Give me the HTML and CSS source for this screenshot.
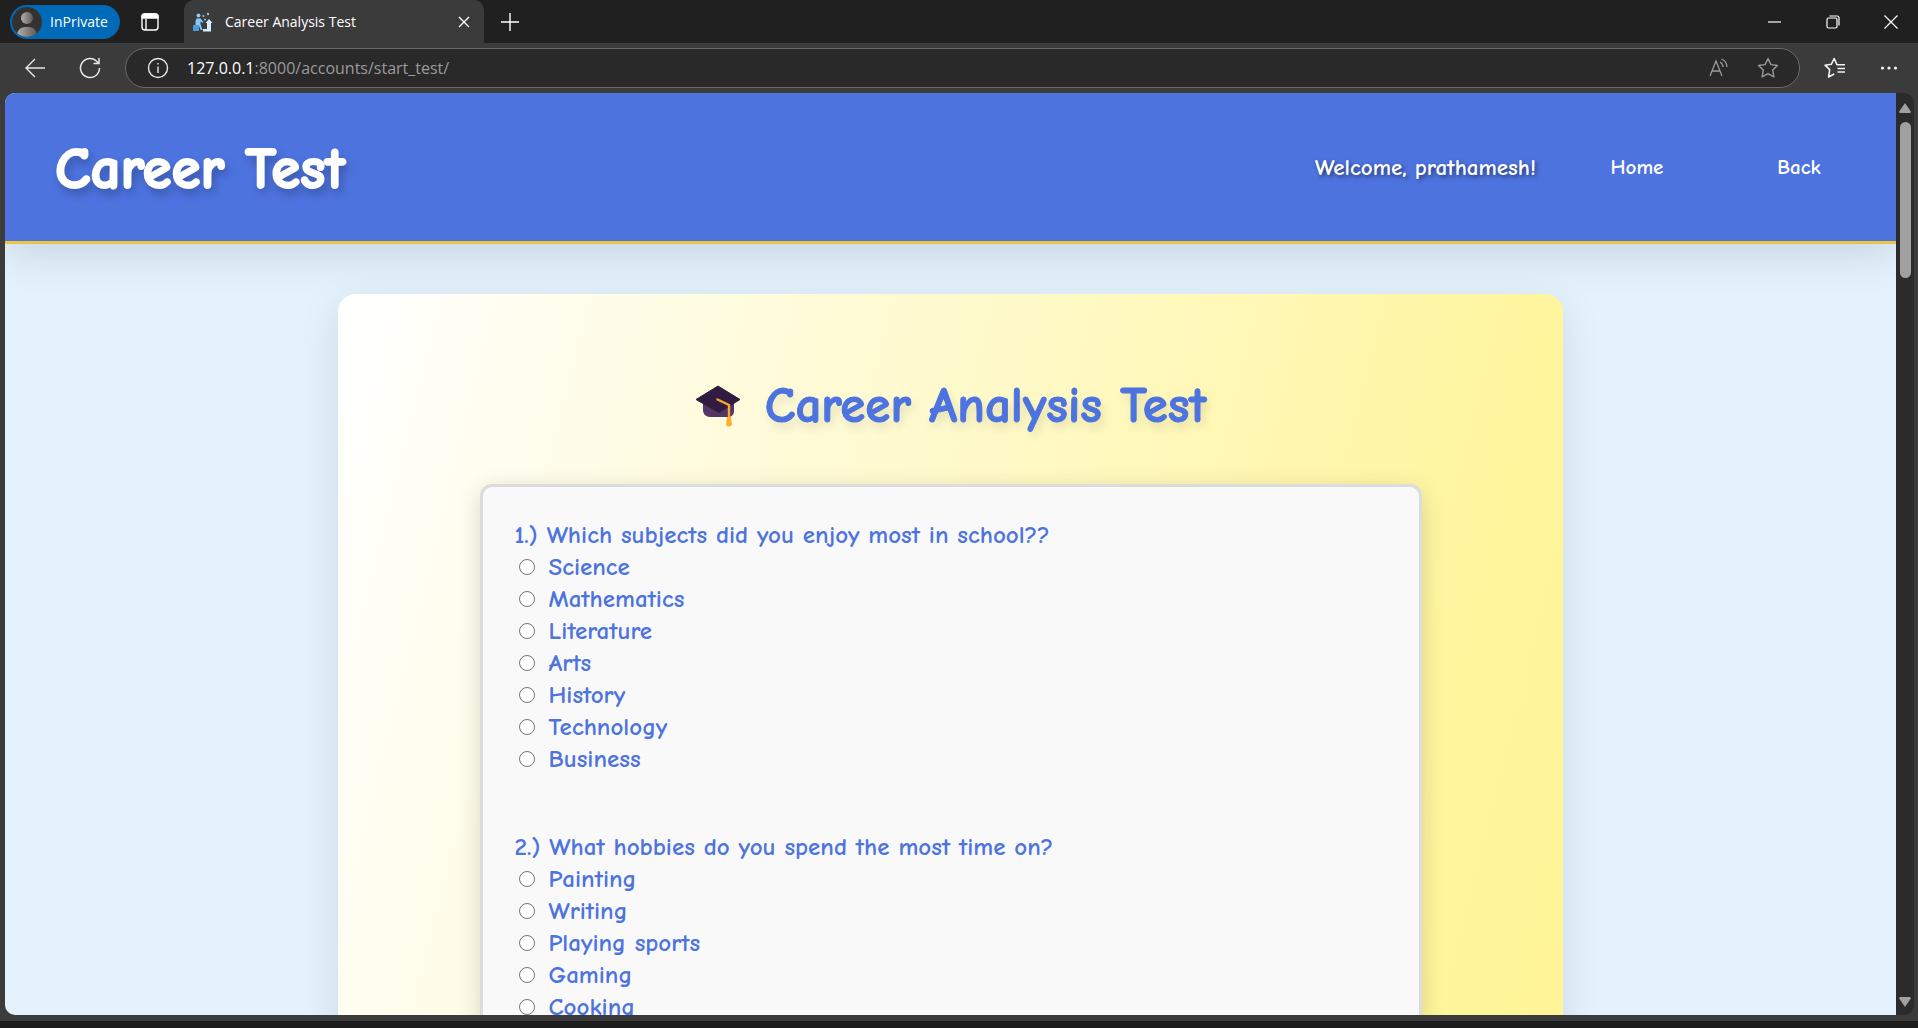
FILE: index.html
```html
<!DOCTYPE html>
<html lang="en">
<head>
<meta charset="utf-8">
<title>Career Analysis Test</title>
<link rel="stylesheet" href="styles.css">
</head>
<body>
<div class="tabbar">
  <button class="profile" type="button">
    <svg width="30" height="30" viewBox="0 0 30 30" aria-hidden="true">
      <defs><linearGradient id="skin"><stop offset="0" stop-color="#b5b0ab"/><stop offset="1" stop-color="#5c5855"/></linearGradient>
      <clipPath id="disc"><circle cx="15" cy="15" r="15"/></clipPath></defs>
      <circle cx="15" cy="15" r="15" fill="#343230"/>
      <g clip-path="url(#disc)" fill="url(#skin)"><circle cx="15" cy="11" r="6"/><path d="M5 30v-3a8 8 0 0 1 8-7h4a8 8 0 0 1 8 7v3z"/></g>
    </svg>
    InPrivate
  </button>
  <button class="icon-btn" type="button" aria-label="Tab actions">
    <svg width="20" height="20" viewBox="0 0 20 20" fill="none" stroke="#fff" stroke-width="1.4"><rect x="2" y="2" width="16" height="16" rx="3"/><path d="M2 4.500a2.500 2.500 0 0 1 2.500-2.500h11a2.500 2.500 0 0 1 2.500 2.500V6H2z" fill="#fff"/><path d="M6 7v11"/></svg>
  </button>
  <div class="tab">
    <svg width="20" height="20" viewBox="0 0 20 20" aria-hidden="true">
      <g fill="#8cc6f7"><circle cx="5.500" cy="3.500" r="2"/><path d="M3.500 6.500h4l3 3.500-1 .8L7.500 9.500V12l2 6H7.800l-2.300-5L4 15H2.500V9z"/><path d="M0 13h6v6H0z" fill="#4d9be0"/><path d="M10 19.500V17h4v-6h-1.500l3.500-4 3.500 4H18v8.500z" fill="#d5ecff"/><circle cx="10.500" cy="4" r="1"/><circle cx="15" cy="2" r="1.200"/><circle cx="12" cy="7.500" r="1"/></g>
    </svg>
    <span class="tab-title">Career Analysis Test</span>
    <button class="plain" type="button" aria-label="Close tab"><svg width="12" height="12" viewBox="0 0 12 12" stroke="#fff" stroke-width="1.4"><path d="M1 1l10 10M11 1L1 11"/></svg></button>
  </div>
  <button class="icon-btn" type="button" aria-label="New tab"><svg width="18" height="18" viewBox="0 0 18 18" stroke="#fff" stroke-width="1.4"><path d="M9 0v18M0 9h18"/></svg></button>
  <div class="window-controls">
    <button class="plain" type="button" aria-label="Minimize"><svg width="14" height="14" viewBox="0 0 14 14" stroke="#fff" stroke-width="1.2"><path d="M0 7h13"/></svg></button>
    <button class="plain" type="button" aria-label="Restore"><svg width="14" height="14" viewBox="0 0 14 14" stroke="#fff" stroke-width="1.200" fill="none"><rect x="1" y="3" width="10" height="10" rx="1.500"/><path d="M3.500 1H11a2 2 0 0 1 2 2v7.500"/></svg></button>
    <button class="plain" type="button" aria-label="Close"><svg width="14" height="14" viewBox="0 0 14 14" stroke="#fff" stroke-width="1.2"><path d="M.5.5l13 13M13.500.5l-13 13"/></svg></button>
  </div>
</div>

<div class="toolbar">
  <button class="plain" type="button" aria-label="Back"><svg width="20" height="20" viewBox="0 0 20 20" fill="none" stroke="#e8e8e8" stroke-width="1.4"><path d="M20 10H1M10 1L1 10l9 9"/></svg></button>
  <button class="plain" type="button" aria-label="Refresh"><svg width="22" height="22" viewBox="0 0 22 22" fill="none" stroke="#e8e8e8" stroke-width="1.5"><path d="M20.500 11A9.500 9.500 0 1 1 17 3.700L20 6.500M20 1v5.500h-5.500"/></svg></button>
  <div class="address">
    <svg width="22" height="22" viewBox="0 0 22 22" fill="none" stroke="#e8e8e8" stroke-width="1.4" aria-hidden="true"><circle cx="11" cy="11" r="9.500"/><path d="M11 9.500V16M11 6v1.600"/></svg>
    <span class="url"><b>127.0.0.1</b>:8000/accounts/start_test/</span>
    <button class="plain" type="button" aria-label="Read aloud"><svg width="20" height="20" viewBox="0 0 20 20" fill="none" stroke="#9a9a9a" stroke-width="1.3"><path d="M1 18L7 3l6 15M3 13h8M11 4c2 1 3 3 3 5M12.500 1c3.500 1.500 5.500 4.500 5.500 8"/></svg></button>
    <button class="plain" type="button" aria-label="Add to favorites"><svg width="22" height="22" viewBox="0 0 22 22" fill="none" stroke="#9a9a9a" stroke-width="1.4" stroke-linejoin="round"><path d="M11 1.500l2.900 6.100 6.600.9-4.800 4.600 1.200 6.700L11 16.600l-5.900 3.200 1.200-6.700L1.500 8.500l6.600-.9z"/></svg></button>
  </div>
  <button class="plain" type="button" aria-label="Favorites"><svg width="22" height="22" viewBox="0 0 22 22" fill="none" stroke="#f2f2f2" stroke-width="1.6" stroke-linejoin="round"><path d="M21 7.800H13L10.200 1.500 7.400 7.200 1 8.200l4.700 4.500L4.600 20l5.600-3M13.500 11.500H21M13.500 15H21"/></svg></button>
  <button class="plain" type="button" aria-label="More"><svg width="18" height="6" viewBox="0 0 18 6" fill="#f2f2f2"><circle cx="2.500" cy="3" r="1.600"/><circle cx="9" cy="3" r="1.600"/><circle cx="15.500" cy="3" r="1.600"/></svg></button>
</div>

<div class="frame">
  <div class="page">
    <header class="site-header">
      <h1>Career Test</h1>
      <nav class="nav">
        <span class="welcome">Welcome, prathamesh!</span>
        <a href="#home">Home</a>
        <a href="#back">Back</a>
      </nav>
    </header>
    <main class="card">
      <h2>
        <svg width="46" height="46" viewBox="0 0 46 46" aria-hidden="true"><path d="M8 19h31v9c0 5-4 6-7 6H15c-5 0-7-4-7-7z" fill="#533566"/><path d="M23 3L45 16.500 24 29.500 1 16.500z" fill="#321b41" stroke="#321b41" stroke-linejoin="round"/><path d="M22.500 16.500L34 22v14" fill="none" stroke="#f9a62b" stroke-width="2.400" stroke-linecap="round"/><path d="M32 34h4l1 8q-3 3-6 0z" fill="#ffb02e"/></svg>
        Career Analysis Test
      </h2>
      <form class="quiz">
        <fieldset>
          <legend>1.) Which subjects did you enjoy most in school??</legend>
          <label><input type="radio" name="q1">Science</label>
          <label><input type="radio" name="q1">Mathematics</label>
          <label><input type="radio" name="q1">Literature</label>
          <label><input type="radio" name="q1">Arts</label>
          <label><input type="radio" name="q1">History</label>
          <label><input type="radio" name="q1">Technology</label>
          <label><input type="radio" name="q1">Business</label>
        </fieldset>
        <fieldset>
          <legend>2.) What hobbies do you spend the most time on?</legend>
          <label><input type="radio" name="q2">Painting</label>
          <label><input type="radio" name="q2">Writing</label>
          <label><input type="radio" name="q2">Playing sports</label>
          <label><input type="radio" name="q2">Gaming</label>
          <label><input type="radio" name="q2">Cooking</label>
        </fieldset>
      </form>
    </main>
  </div>
  <div class="scrollbar" aria-hidden="true">
    <svg width="12" height="10" viewBox="0 0 12 10" fill="#a0a0a0"><path d="M6 0l5.800 8.500q.2 1.500-1 1.500H1.200Q0 10 .2 8.500z"/></svg>
    <div class="track"><div class="thumb"></div></div>
    <svg width="12" height="10" viewBox="0 0 12 10" fill="#a0a0a0"><path d="M6 10L.2 1.500Q0 0 1.200 0h9.600q1.200 0 1 1.500z"/></svg>
  </div>
</div>
<div class="taskbar"></div>
</body>
</html>
```
FILE: styles.css
```css
* { box-sizing: border-box; }

body {
  margin: 0;
  height: 100vh;
  display: flex;
  flex-direction: column;
  overflow: hidden;
  background: #3b3b3b;
  color: #fff;
  font-family: "Segoe UI", "Open Sans", sans-serif;
}

button {
  border: 0;
  padding: 0;
  background: none;
  color: inherit;
  font: inherit;
}

svg { display: block; flex: none; }

.tabbar {
  flex: none;
  display: flex;
  align-items: center;
  height: 43px;
  padding-left: 10px;
  background: #202020;
}

.profile {
  display: flex;
  align-items: center;
  gap: 8px;
  width: 110px;
  height: 34px;
  padding: 0 2px;
  border-radius: 17px;
  background: #0069b8;
  font-size: 14px;
}

.icon-btn {
  display: grid;
  place-items: center;
  width: 52px;
  height: 43px;
}

.profile + .icon-btn { margin: 0 8px 0 4px; }

.tab {
  display: flex;
  align-items: center;
  gap: 12px;
  width: 300px;
  height: 43px;
  padding: 0 14px 0 9px;
  border-radius: 10px 10px 0 0;
  background: #3b3b3b;
  font-size: 14px;
}

.tab-title { flex: 1; white-space: nowrap; }

.window-controls {
  display: flex;
  gap: 44px;
  margin-left: auto;
  padding-right: 20px;
}

.toolbar {
  flex: none;
  display: flex;
  align-items: center;
  gap: 34px;
  height: 50px;
  padding: 0 20px 0 25px;
}

.address {
  flex: 1;
  display: flex;
  align-items: center;
  gap: 28px;
  height: 40px;
  margin: 0 -10px;
  padding: 0 20px 0 21px;
  border: 1px solid #6b6b6b;
  border-radius: 20px;
  background: #292929;
}

.url {
  flex: 1;
  margin-left: -10px;
  color: #9a9a9a;
  font-size: 16px;
  white-space: nowrap;
}

.url b { color: #fff; font-weight: 400; }

.frame {
  flex: 1;
  min-height: 0;
  display: flex;
  margin: 0 4px 6px 5px;
}

.page {
  flex: 1;
  overflow: hidden;
  border-radius: 10px 0 0 10px;
  background: #e3f2fd;
  color: #4d73df;
  font-family: "Comic Sans MS", "Comic Neue", "Noto Sans", sans-serif;
}

.site-header {
  display: flex;
  align-items: center;
  justify-content: space-between;
  height: 151px;
  padding: 0 40px 0 50px;
  border-bottom: 3px solid #ecc440;
  background: #4d73df;
  box-shadow: 0 10px 40px rgba(0, 0, 0, 0.12);
  color: #fff;
}

h1, h2 { margin: 0; font-weight: 700; }

h1 {
  padding-top: 4px;
  font-size: 59px;
  line-height: 70px;
  text-shadow: 3px 6px 10px rgba(0, 0, 0, 0.3);
  -webkit-text-stroke: 2px currentColor;
}

.nav {
  display: flex;
  align-items: center;
  gap: 48px;
  font-size: 21px;
  font-weight: 700;
}

.nav a {
  min-width: 114px;
  color: inherit;
  text-align: center;
  text-decoration: none;
}

.welcome {
  margin-right: -4px;
  font-size: 23px;
  text-shadow: 2px 2px 4px rgba(0, 0, 0, 0.5);
}

.card {
  width: 90%;
  max-width: 1225px;
  margin: 50px auto;
  padding: 80px 50px;
  border-radius: 18px;
  background: linear-gradient(104deg, #fff, #fff59d 1188px, #fff176 2400px);
  box-shadow: 0 10px 40px rgba(0, 0, 0, 0.1);
}

h2 {
  display: flex;
  align-items: center;
  justify-content: center;
  gap: 24px;
  margin-bottom: 46px;
  font-size: 51px;
  line-height: 64px;
  text-shadow: 3px 6px 10px rgba(0, 0, 0, 0.12);
  -webkit-text-stroke: 1px currentColor;
}

.quiz {
  display: flex;
  flex-direction: column;
  gap: 56px;
  max-width: 942px;
  margin: 0 auto;
  padding: 32px 32px 80px;
  border: 3px solid #dcdcdc;
  border-radius: 12px;
  background: #f9f9f9;
  box-shadow: 0 6px 24px rgba(0, 0, 0, 0.15);
  font-size: 25px;
  font-weight: 700;
  line-height: 32px;
}

fieldset { margin: 0; padding: 0; border: 0; min-width: 0; }

legend { padding: 0; }

label {
  display: flex;
  align-items: center;
  gap: 14px;
  padding-left: 4px;
}

input[type="radio"] {
  appearance: none;
  width: 16px;
  height: 16px;
  margin: 0;
  border: 1px solid #767676;
  border-radius: 50%;
  background: #fff;
}

.scrollbar {
  flex: none;
  display: flex;
  flex-direction: column;
  align-items: center;
  width: 18px;
  padding: 10px 0 8px;
  border-radius: 0 10px 10px 0;
  background: #2b2b2b;
}

.track { flex: 1; padding: 9px 0; }

.thumb {
  width: 11px;
  height: 18%;
  border-radius: 6px;
  background: #a0a0a0;
}

.taskbar { flex: none; height: 7px; background: #1c1c1c; }
```
